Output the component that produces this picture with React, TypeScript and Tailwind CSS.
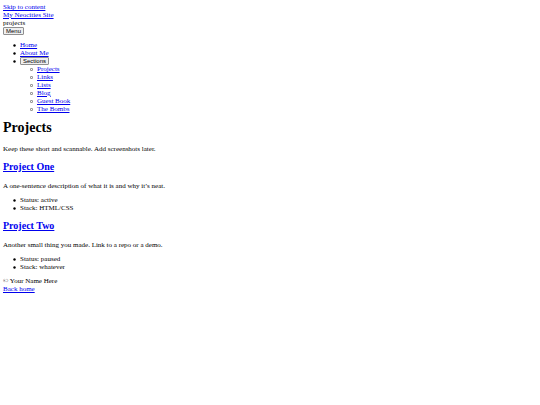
import type { ReactNode } from "react";

const link = "text-[#0000ee] underline";
const button =
  "block rounded-[1px] border border-[#8f8f8f] bg-[#efefef] px-[2px] font-['Liberation_Sans',Arial,sans-serif] text-[6px] leading-[6px] text-black";

const pages = ["Projects", "Links", "Lists", "Blog", "Guest Book", "The Bombs"];

const projects = [
  {
    name: "Project One",
    text: "A one-sentence description of what it is and why it’s neat.",
    facts: ["Status: active", "Stack: HTML/CSS"],
  },
  {
    name: "Project Two",
    text: "Another small thing you made. Link to a repo or a demo.",
    facts: ["Status: paused", "Stack: whatever"],
  },
];

type ItemProps = { children: ReactNode; hollow?: boolean; nested?: ReactNode };

function Item({ children, hollow, nested }: ItemProps) {
  return (
    <li>
      <div className="flex items-center">
        <span className="flex w-[17px] shrink-0 justify-end pr-[4px]">
          {hollow ? (
            <svg className="size-[3px]" viewBox="0 0 3 3" aria-hidden="true">
              <circle cx="1.5" cy="1.5" r="1.15" fill="none" stroke="#333" strokeWidth="0.6" />
            </svg>
          ) : (
            <svg className="size-[3px]" viewBox="0 0 3 3" aria-hidden="true">
              <circle cx="1.5" cy="1.5" r="1.2" fill="#000" />
            </svg>
          )}
        </span>
        {children}
      </div>
      {nested}
    </li>
  );
}

export default function App() {
  return (
    <div className="min-h-screen bg-white p-[3px] font-['Liberation_Serif','Times_New_Roman',serif] text-[7px] leading-[8px] text-black">
      <header>
        <div><a href="#main" className={link}>Skip to content</a></div>
        <div><a href="#home" className={link}>My Neocities Site</a></div>
        <div>projects</div>
        <nav>
          <button type="button" className={button}>Menu</button>
          <ul className="mt-[6px]">
            <Item><a href="#home" className={link}>Home</a></Item>
            <Item><a href="#about" className={link}>About Me</a></Item>
            <Item
              nested={
                <ul className="pl-[17px]">
                  {pages.map((page) => (
                    <Item key={page} hollow>
                      <a href="#main" className={link}>{page}</a>
                    </Item>
                  ))}
                </ul>
              }
            >
              <button type="button" className={button}>Sections</button>
            </Item>
          </ul>
        </nav>
      </header>
      <main id="main">
        <h1 className="mt-[7px] text-[14px] leading-[16px] font-bold">Projects</h1>
        <p className="mt-[9px]">Keep these short and scannable. Add screenshots later.</p>
        {projects.map((project) => (
          <article key={project.name}>
            <h2 className="mt-[8px] text-[10px] leading-[12px] font-bold">
              <a href="#main" className={link}>{project.name}</a>
            </h2>
            <p className="mt-[9px]">{project.text}</p>
            <ul className="mt-[6px]">
              {project.facts.map((fact) => <Item key={fact}>{fact}</Item>)}
            </ul>
          </article>
        ))}
      </main>
      <footer className="mt-[6px]">
        <div>© Your Name Here</div>
        <div><a href="#home" className={link}>Back home</a></div>
      </footer>
    </div>
  );
}
